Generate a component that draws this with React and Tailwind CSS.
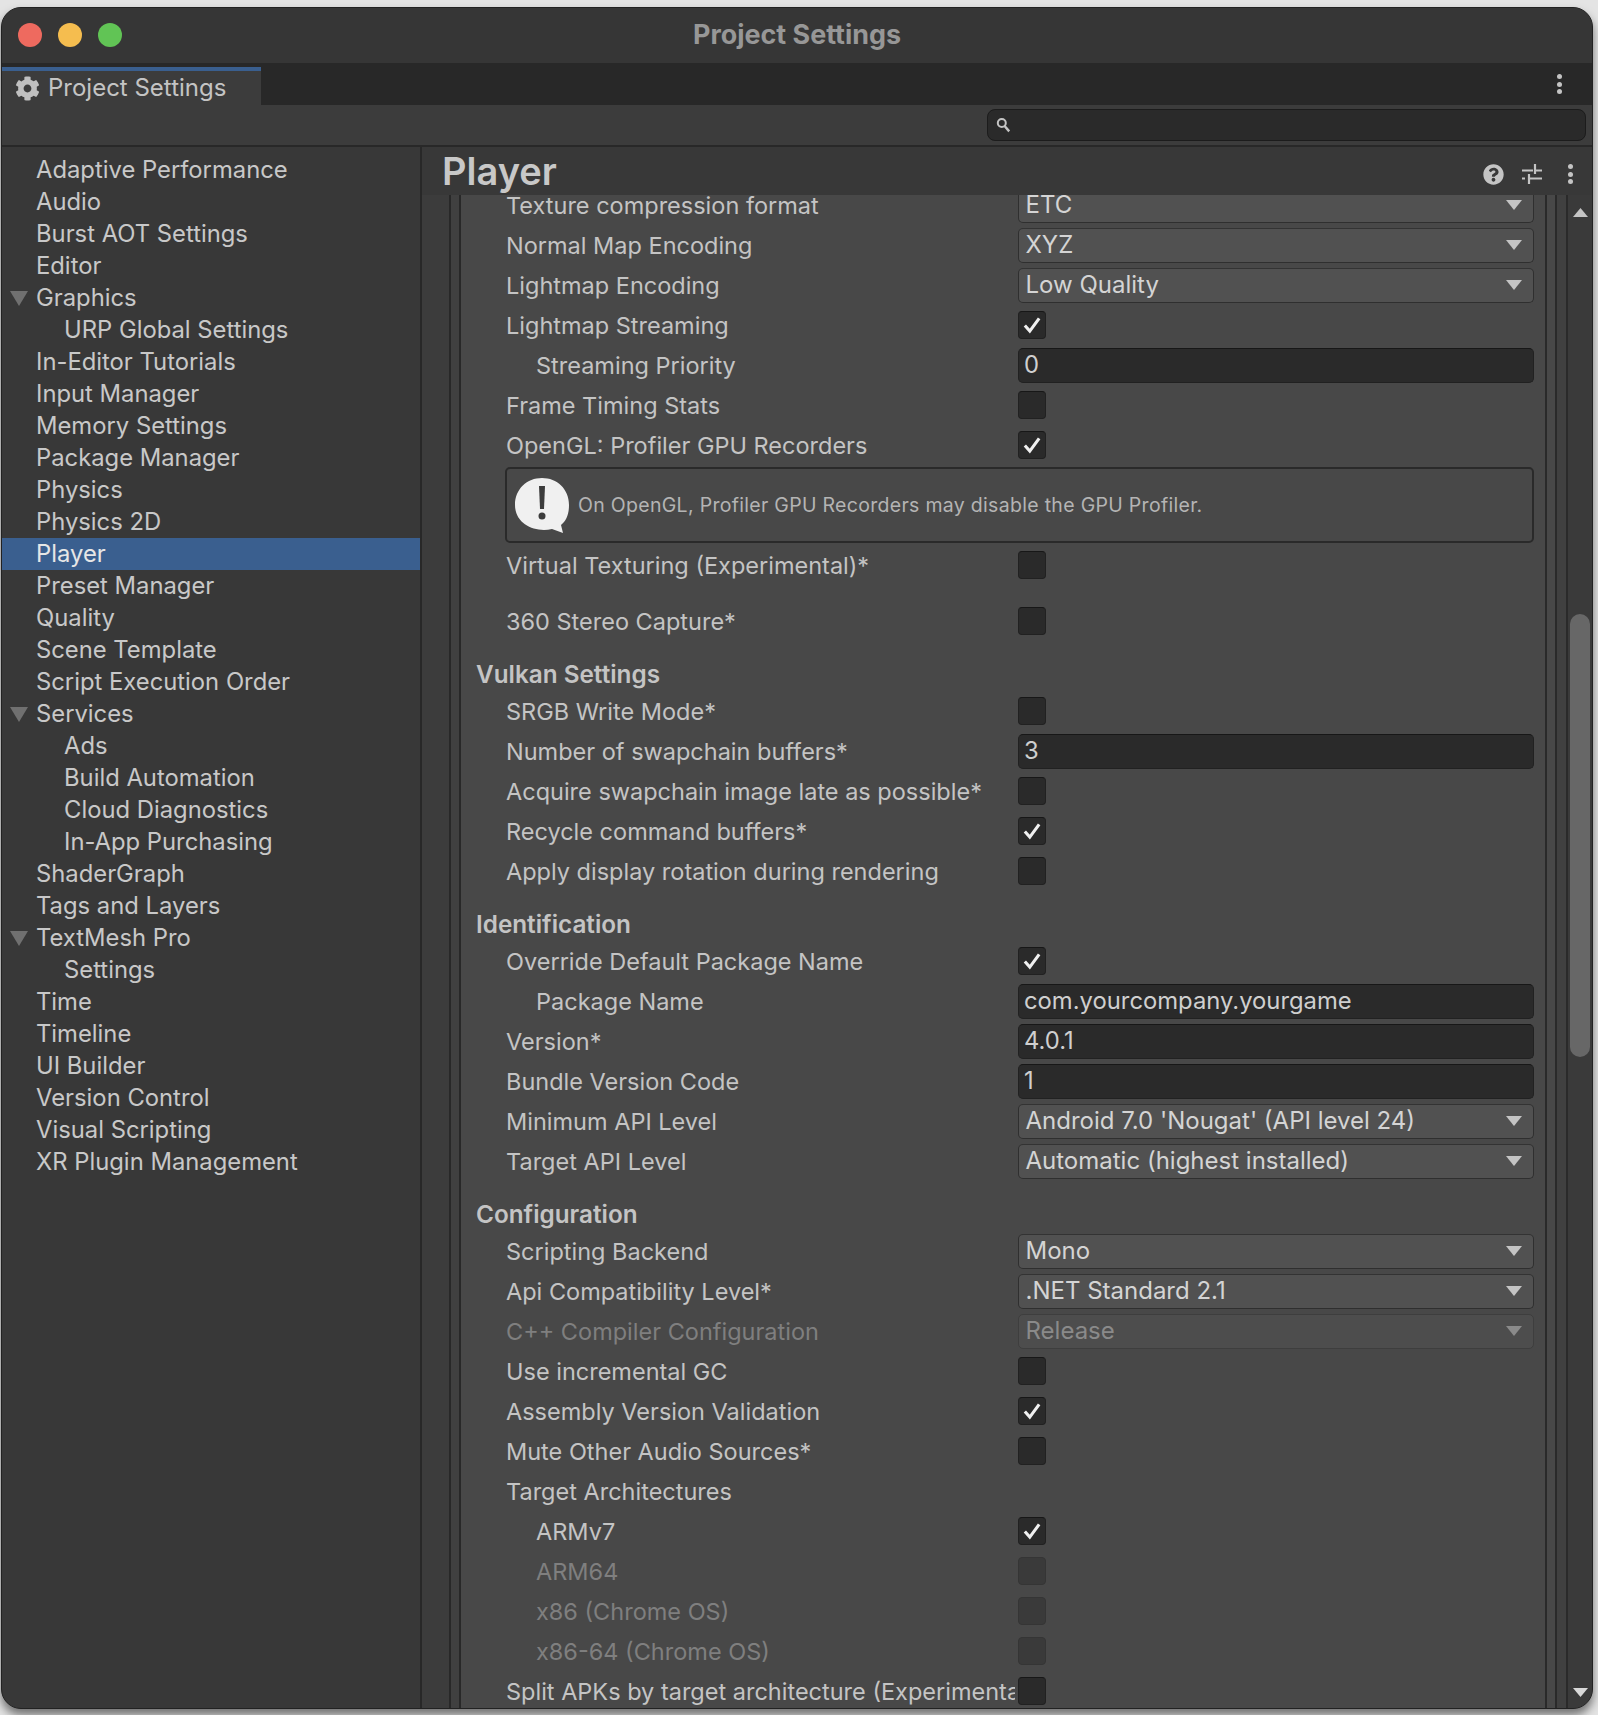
import { FaCog, FaQuestionCircle } from "react-icons/fa";

const tree = [
  ["Adaptive Performance"], ["Audio"], ["Burst AOT Settings"], ["Editor"],
  ["Graphics", "open"], ["URP Global Settings", "child"], ["In-Editor Tutorials"], ["Input Manager"],
  ["Memory Settings"], ["Package Manager"], ["Physics"], ["Physics 2D"], ["Player", "active"],
  ["Preset Manager"], ["Quality"], ["Scene Template"], ["Script Execution Order"],
  ["Services", "open"], ["Ads", "child"], ["Build Automation", "child"], ["Cloud Diagnostics", "child"],
  ["In-App Purchasing", "child"], ["ShaderGraph"], ["Tags and Layers"], ["TextMesh Pro", "open"],
  ["Settings", "child"], ["Time"], ["Timeline"], ["UI Builder"], ["Version Control"],
  ["Visual Scripting"], ["XR Plugin Management"],
];

function Kebab() {
  return (
    <div className="flex flex-col gap-[2.5px]">
      <span className="size-[5px] rounded-full bg-[#c4c4c4]" />
      <span className="size-[5px] rounded-full bg-[#c4c4c4]" />
      <span className="size-[5px] rounded-full bg-[#c4c4c4]" />
    </div>
  );
}

function Caret({ disabled }) {
  return (
    <svg width="16" height="10" viewBox="0 0 16 10" className="shrink-0">
      <path d="M0 0h16L8 10z" fill={disabled ? "#8a8a8a" : "#c4c4c4"} />
    </svg>
  );
}

function Check({ on, disabled }) {
  return (
    <div className={`mb-[2px] flex size-[28px] shrink-0 items-center justify-center rounded-[4px] border-[1.5px] ${disabled ? "border-[#353535] bg-[#3a3a3a]" : "border-[#212121] border-t-[#171717] bg-[#2a2a2a]"}`}>
      {on && (
        <svg width="22" height="22" viewBox="0 0 20 20">
          <path d="M3.5 10.5l4.5 5 8.5-11.5" fill="none" stroke="#f0f0f0" strokeWidth="2.8" />
        </svg>
      )}
    </div>
  );
}

function Label({ children, sub, dim }) {
  return (
    <div className={`mr-[3px] w-[509px] shrink-0 overflow-hidden text-[23.5px] whitespace-nowrap ${sub ? "pl-[30px]" : ""} ${dim ? "text-[#7f7f7f]" : "text-[#c4c4c4]"}`}>
      {children}
    </div>
  );
}

function Row({ label, sub, dim, children }) {
  return (
    <div className="flex h-10 items-center">
      <Label sub={sub} dim={dim}>{label}</Label>
      {children}
    </div>
  );
}

function CheckRow({ label, on, sub, dim, className }) {
  return (
    <div className={className}>
      <Row label={label} sub={sub} dim={dim}>
        <Check on={on} disabled={dim} />
      </Row>
    </div>
  );
}

function Dropdown({ label, value, dim }) {
  return (
    <Row label={label} dim={dim}>
      <div className={`mb-[2px] flex h-[35px] flex-1 items-center justify-between rounded-[5px] border-[1.5px] pr-[11px] pl-[6.5px] text-[24px] ${dim ? "border-[#3e3e3e] bg-[#4d4d4d] text-[#8a8a8a]" : "border-[#2f2f2f] border-t-[#333] bg-[#515151] text-[#d4d4d4]"}`}>
        <span>{value}</span>
        <Caret disabled={dim} />
      </div>
    </Row>
  );
}

function Field({ label, value, sub }) {
  return (
    <Row label={label} sub={sub}>
      <div className="mb-[2px] flex h-[35px] flex-1 items-center rounded-[5px] border-[1.5px] border-[#212121] border-t-[#171717] bg-[#2a2a2a] pl-[5px] text-[23.8px] text-[#cfcfcf]">
        {value}
      </div>
    </Row>
  );
}

function Heading({ children }) {
  return (
    <div className="-ml-[30px] flex h-[50px] items-end text-[24.3px] font-semibold text-[#c4c4c4]">
      {children}
    </div>
  );
}

export default function App() {
  return (
    <div className="h-[1715px] w-[1598px] overflow-hidden bg-[#e4e4e4] pt-[7px] pl-[1px] font-['Inter',sans-serif]">
      <div className="flex h-[1702px] w-[1592px] flex-col overflow-hidden rounded-[20px] border-[1.5px] border-[#222222] bg-[#383838] shadow-[0_6px_10px_rgba(0,0,0,0.5)]">
        {/* title bar */}
        <div className="relative flex h-[55px] shrink-0 items-center justify-center bg-[#363636] pb-[2px]">
          <div className="absolute top-[15px] left-[16px] flex gap-[16px]">
            <span className="size-[24px] rounded-full bg-[#ee6a5f]" />
            <span className="size-[24px] rounded-full bg-[#f5bd4f]" />
            <span className="size-[24px] rounded-full bg-[#61c455]" />
          </div>
          <span className="text-[26.9px] font-bold text-[#979797]">Project Settings</span>
        </div>

        {/* tab strip */}
        <div className="flex h-[42px] shrink-0 items-stretch justify-between bg-[#282828] pt-[4px]">
          <div className="flex w-[259px] items-center gap-[8px] border-t-[4px] border-[#3a5f8f] bg-[#3c3c3c] pl-[13px] text-[24px] text-[#c4c4c4]">
            <FaCog className="size-[25px] text-[#c0c0c0]" />
            Project Settings
          </div>
          <div className="flex items-center pr-[30px] pb-[4px]">
            <Kebab />
          </div>
        </div>

        {/* search toolbar */}
        <div className="flex h-[42px] shrink-0 items-center justify-end border-b-[2px] border-[#282828] bg-[#3c3c3c] pr-[6px]">
          <div className="flex h-[32px] w-[599px] items-center rounded-[8px] border-[1.5px] border-[#1c1c1c] bg-[#2a2a2a] pl-[8px]">
            <svg width="15" height="16" viewBox="0 0 15 16">
              <circle cx="5.8" cy="6" r="4" fill="none" stroke="#c4c4c4" strokeWidth="2" />
              <path d="M8.6 9l4.6 5.4" stroke="#c4c4c4" strokeWidth="2.4" />
            </svg>
          </div>
        </div>

        <div className="flex min-h-0 flex-1">
          {/* settings tree */}
          <div className="w-[420px] shrink-0 border-r-[2px] border-[#282828] pt-[7px]">
            {tree.map(([name, kind]) => (
              <div
                key={name}
                className={`relative flex h-[32px] items-center text-[23.8px] ${kind === "child" ? "pl-[62px]" : "pl-[34px]"} ${kind === "active" ? "bg-[#3a5f8f] text-[#e6e6e6]" : "text-[#c8c8c8]"}`}
              >
                {kind === "open" && (
                  <svg width="18" height="15" viewBox="0 0 18 15" className="absolute top-[9px] left-[8px]">
                    <path d="M0 0h18L9 15z" fill="#707070" />
                  </svg>
                )}
                {name}
              </div>
            ))}
          </div>

          <div className="flex min-w-0 flex-1 flex-col">
            {/* inspector header */}
            <div className="flex h-[48px] shrink-0 items-center justify-between pr-[19px] pl-[20px]">
              <span className="text-[38px] font-semibold text-[#c8c8c8]">Player</span>
              <div className="flex items-center pt-[6px]">
                <FaQuestionCircle className="size-[21px] text-[#c4c4c4]" />
                <svg width="20" height="20" viewBox="0 0 20 20" className="ml-[18px]">
                  <path d="M0 6.5h11M14 6.5h6M13 0v10M0 14.5h3M6 14.5h14M7 10v10" stroke="#c4c4c4" strokeWidth="2.2" fill="none" />
                </svg>
                <div className="ml-[26px]">
                  <Kebab />
                </div>
              </div>
            </div>

            <div className="flex min-h-0 flex-1">
              <div className="w-[29px] shrink-0 border-r-[2px] border-[#282828] bg-[#3c3c3c]" />
              <div className="w-[10px] shrink-0 border-r-[2px] border-[#282828] bg-[#404040]" />

              {/* player settings */}
              <div className="w-[1086px] shrink-0 overflow-hidden border-r-[2px] border-[#2a2a2a] bg-[#484848] pl-[45px]">
                <div className="-mt-[9px] w-[1028px]">
                  <Dropdown label="Texture compression format" value="ETC" />
                  <Dropdown label="Normal Map Encoding" value="XYZ" />
                  <Dropdown label="Lightmap Encoding" value="Low Quality" />
                  <CheckRow label="Lightmap Streaming" on />
                  <Field label="Streaming Priority" value="0" sub />
                  <CheckRow label="Frame Timing Stats" />
                  <CheckRow label="OpenGL: Profiler GPU Recorders" on />
                  <div className="mt-[1px] -ml-[1.5px] flex h-[76px] items-center rounded-[5px] border-[2px] border-[#2a2a2a] pl-[8px]">
                    <svg width="54" height="55" viewBox="0 0 54 55" className="shrink-0">
                      <path d="M27 0C42 0 54 11 54 27c0 10-3 16-8 20l2 8-11-4C20 55 0 46 0 27 0 11 12 0 27 0z" fill="#f0f0f0" />
                      <path d="M24 8h6l-1 23h-4z" fill="#3c3c3c" />
                      <circle cx="27" cy="38" r="3.5" fill="#3c3c3c" />
                    </svg>
                    <span className="mt-[2px] ml-[9.5px] text-[19.5px] tracking-[0.3px] text-[#b4b4b4]">
                      On OpenGL, Profiler GPU Recorders may disable the GPU Profiler.
                    </span>
                  </div>
                  <CheckRow label="Virtual Texturing (Experimental)*" className="mt-[3px]" />
                  <CheckRow label="360 Stereo Capture*" className="mt-[16px]" />

                  <Heading>Vulkan Settings</Heading>
                  <CheckRow label="SRGB Write Mode*" />
                  <Field label="Number of swapchain buffers*" value="3" />
                  <CheckRow label="Acquire swapchain image late as possible*" />
                  <CheckRow label="Recycle command buffers*" on />
                  <CheckRow label="Apply display rotation during rendering" />

                  <Heading>Identification</Heading>
                  <CheckRow label="Override Default Package Name" on />
                  <Field label="Package Name" value="com.yourcompany.yourgame" sub />
                  <Field label="Version*" value="4.0.1" />
                  <Field label="Bundle Version Code" value="1" />
                  <Dropdown label="Minimum API Level" value="Android 7.0 'Nougat' (API level 24)" />
                  <Dropdown label="Target API Level" value="Automatic (highest installed)" />

                  <Heading>Configuration</Heading>
                  <Dropdown label="Scripting Backend" value="Mono" />
                  <Dropdown label="Api Compatibility Level*" value=".NET Standard 2.1" />
                  <Dropdown label="C++ Compiler Configuration" value="Release" dim />
                  <CheckRow label="Use incremental GC" />
                  <CheckRow label="Assembly Version Validation" on />
                  <CheckRow label="Mute Other Audio Sources*" />
                  <Row label="Target Architectures" />
                  <CheckRow label="ARMv7" on sub />
                  <CheckRow label="ARM64" sub dim />
                  <CheckRow label="x86 (Chrome OS)" sub dim />
                  <CheckRow label="x86-64 (Chrome OS)" sub dim />
                  <CheckRow label="Split APKs by target architecture (Experimental)" />
                </div>
              </div>
              <div className="w-[10px] shrink-0 border-r-[2px] border-[#2a2a2a] bg-[#484848]" />
              <div className="w-[9px] shrink-0 bg-[#404040]" />

              {/* scrollbar */}
              <div className="flex min-w-0 flex-1 flex-col items-center border-l-[2px] border-[#2a2a2a] bg-[#3a3a3a] pt-[13px] pb-[11px]">
                <svg width="15" height="9" viewBox="0 0 15 9" className="shrink-0">
                  <path d="M7.5 0L15 9H0z" fill="#c4c4c4" />
                </svg>
                <div className="mt-[397px] h-[443px] w-[20px] shrink-0 rounded-full bg-[#676767]" />
                <svg width="15" height="9" viewBox="0 0 15 9" className="mt-auto shrink-0">
                  <path d="M0 0h15L7.5 9z" fill="#d8d8d8" />
                </svg>
              </div>
            </div>
          </div>
        </div>
      </div>
    </div>
  );
}
